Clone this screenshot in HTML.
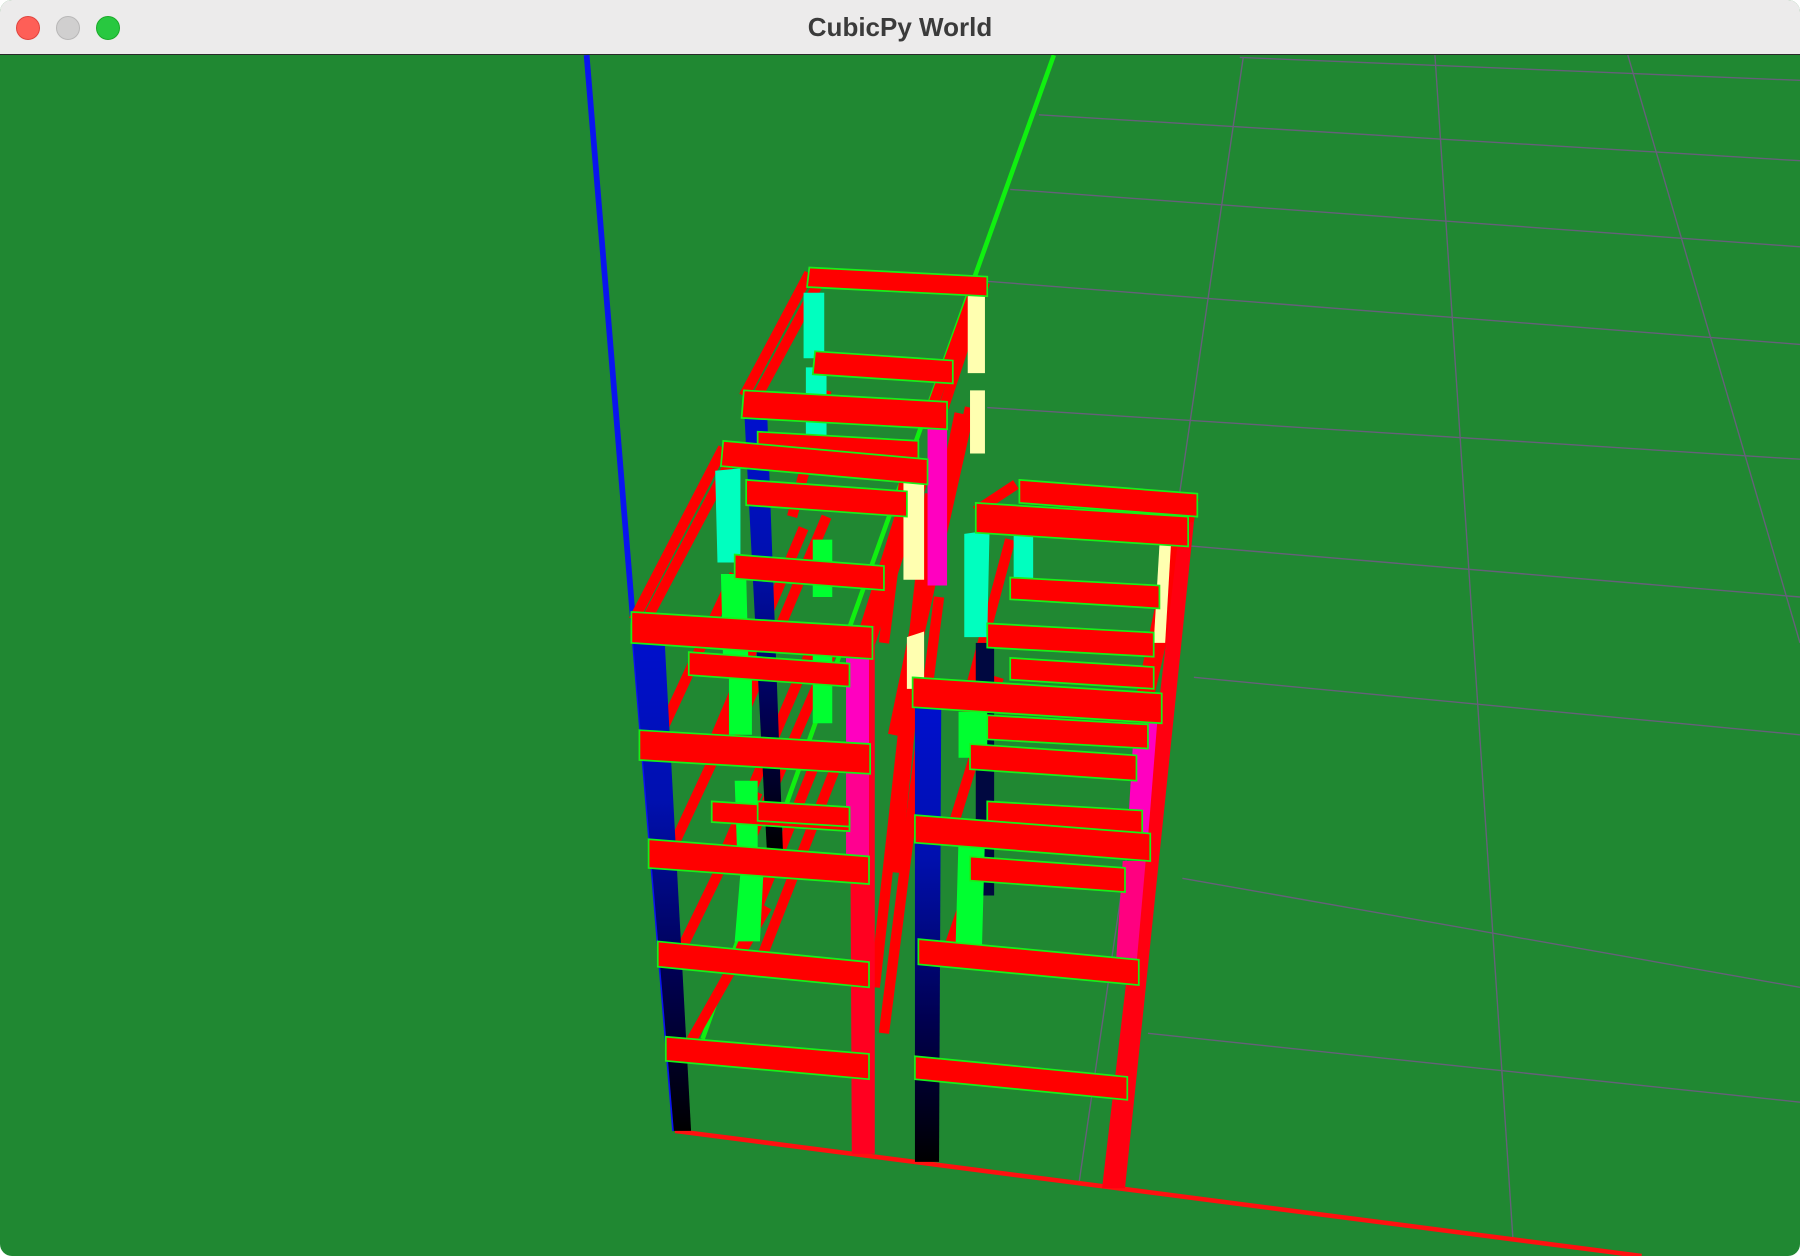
<!DOCTYPE html>
<html><head><meta charset="utf-8"><style>
html,body{margin:0;padding:0;background:#fff;}
.win{position:relative;width:1800px;height:1256px;overflow:hidden;border-radius:12px;background:#208832;}
.tb{position:absolute;left:0;top:0;width:1800px;height:55px;background:#ecebeb;border-bottom:1px solid #2a2a2a;box-sizing:border-box;}
.tb .t{position:absolute;left:0;right:0;top:12px;text-align:center;font:bold 26px "Liberation Sans",sans-serif;color:#3b3b3b;}
.d{position:absolute;top:16px;width:24px;height:24px;border-radius:50%;}
svg{position:absolute;left:0;top:0;}
</style></head><body><div class="win">
<svg width="1800" height="1256" viewBox="0 0 1568 1094" preserveAspectRatio="none">
<defs><linearGradient id="bl" x1="0" y1="0" x2="0" y2="1"><stop offset="0" stop-color="#0010d0"/><stop offset="0.35" stop-color="#0010b0"/><stop offset="0.7" stop-color="#000050"/><stop offset="1" stop-color="#000"/></linearGradient></defs>
<g stroke="#66607a" stroke-width="1.2" fill="none">
<path d="M1080 50 L1568 70"/><path d="M905 100 L1568 140"/><path d="M880 165 L1568 215"/><path d="M860 245 L1568 300"/><path d="M860 355 L1568 400"/><path d="M1030 475 L1568 520"/><path d="M1040 590 L1568 640"/><path d="M1030 765 L1568 860"/><path d="M1000 900 L1568 960"/>
<path d="M1083 50 L940 1030"/><path d="M1250 48 L1318 1080"/><path d="M1418 48 L1568 560"/>
</g>
<path d="M511 48 L588 985" stroke="#0a14f0" stroke-width="5"/>
<path d="M918 48 L612 905" stroke="#10f010" stroke-width="4"/>
<path d="M588 985 L1430 1094" stroke="#ff1010" stroke-width="4"/>
<g stroke="#ff0000" stroke-width="9" fill="none">
<path d="M705 238 L648 345"/><path d="M714 245 L657 350"/><path d="M858 246 L822 355"/><path d="M850 250 L813 352"/>
<path d="M630 390 L552 540"/><path d="M640 395 L562 542"/><path d="M808 405 L758 560"/><path d="M798 405 L750 558"/>
<path d="M885 422 L850 445"/><path d="M1040 434 L1000 610"/><path d="M1030 438 L993 612"/>
<path d="M845 355 L790 600"/><path d="M836 360 L778 640"/><path d="M810 430 L762 860"/><path d="M818 520 L770 900"/>
<path d="M640 500 L575 640"/><path d="M650 600 L585 740"/><path d="M660 690 L592 830"/><path d="M668 790 L600 910"/>
<path d="M720 450 L640 640"/><path d="M728 560 L650 740"/><path d="M735 650 L665 830"/>
<path d="M700 460 L620 650"/><path d="M705 570 L628 750"/><path d="M712 660 L640 840"/>
<path d="M880 470 L840 620"/><path d="M870 590 L830 720"/><path d="M870 700 L825 830"/>
<path d="M720 340 L690 450"/><path d="M790 400 L770 560"/><path d="M800 560 L780 760"/>
</g>
<polygon points="550,540 578,540 602,985 587,985" fill="url(#bl)"/>
<polygon points="648,352 668,352 682,740 668,740" fill="url(#bl)"/>
<polygon points="797,600 820,600 818,1012 797,1012" fill="url(#bl)"/>
<rect x="850" y="560" width="16" height="220" fill="#000840"/>
<g fill="#00ffbf"><polygon points="700,255 718,255 718,312 700,312"/><polygon points="623,410 645,408 645,490 625,490"/><polygon points="840,465 862,462 860,555 840,555"/><polygon points="883,460 900,460 900,505 883,505"/><polygon points="702,320 720,320 720,385 702,385"/></g>
<g fill="#00ff30"><polygon points="628,500 650,500 652,580 630,580"/><polygon points="635,590 655,590 655,640 635,640"/><polygon points="640,680 660,680 660,740 642,740"/><polygon points="645,760 665,760 662,820 640,820"/><polygon points="835,620 860,620 860,660 835,660"/><polygon points="835,730 858,730 855,840 832,840"/><polygon points="708,470 725,470 725,520 708,520"/><polygon points="708,560 725,560 725,630 708,630"/></g>
<g fill="#ffffb0"><polygon points="787,420 805,420 805,505 787,505"/><polygon points="843,258 858,255 858,325 843,325"/><polygon points="845,340 858,340 858,395 845,395"/><polygon points="790,555 805,550 805,600 790,600"/><polygon points="1010,475 1020,475 1015,560 1005,560"/></g>
<polygon points="740,545 762,545 762,1005 742,1005" fill="#ff0020"/>
<polygon points="737,572 757,572 757,655 737,655" fill="#ff00c0"/>
<polygon points="737,672 757,672 757,750 737,750" fill="#ff0090"/>
<polygon points="808,360 825,360 825,510 808,510" fill="#ff00c0"/>
<polygon points="1028,455 1040,455 980,1035 960,1035" fill="#ff0010"/>
<polygon points="988,630 1008,630 1000,730 982,730" fill="#ff00c0"/>
<polygon points="978,750 998,750 990,840 972,840" fill="#ff0080"/>
<g fill="#ff0000" stroke="#18f018" stroke-width="1.5">
<polygon points="705,233 860,241 860,258 703,250"/>
<polygon points="710,306 830,314 830,334 708,326"/>
<polygon points="648,340 825,350 825,374 646,364"/>
<polygon points="660,376 800,384 800,404 660,396"/>
<polygon points="630,384 808,400 808,422 628,406"/>
<polygon points="650,418 790,428 790,450 650,440"/>
<polygon points="640,483 770,493 770,514 640,504"/>
<polygon points="550,533 760,546 760,574 550,560"/>
<polygon points="600,568 740,578 740,598 600,588"/>
<polygon points="557,636 758,648 758,674 557,662"/>
<polygon points="620,698 740,706 740,724 620,716"/>
<polygon points="565,731 757,746 757,770 565,756"/>
<polygon points="573,820 757,838 757,860 573,842"/>
<polygon points="580,903 757,918 757,940 580,924"/>
<polygon points="888,418 1043,430 1043,450 888,438"/>
<polygon points="850,438 1035,450 1035,476 850,464"/>
<polygon points="880,503 1010,510 1010,530 880,522"/>
<polygon points="860,543 1005,551 1005,572 860,564"/>
<polygon points="880,573 1005,581 1005,600 880,592"/>
<polygon points="795,590 1012,604 1012,630 795,616"/>
<polygon points="860,623 1000,631 1000,652 860,644"/>
<polygon points="845,648 990,658 990,680 845,670"/>
<polygon points="860,698 995,706 995,726 860,718"/>
<polygon points="797,710 1002,726 1002,750 797,734"/>
<polygon points="845,746 980,756 980,777 845,767"/>
<polygon points="800,818 992,836 992,858 800,840"/>
<polygon points="797,920 982,938 982,958 797,940"/>
<polygon points="660,698 740,703 740,720 660,715"/>
</g>
</svg>
<div class="tb"><div class="d" style="left:16px;background:#fe5f57;border:1px solid #e0443e;box-sizing:border-box"></div><div class="d" style="left:56px;background:#d0cfcf;border:1px solid #b8b7b7;box-sizing:border-box"></div><div class="d" style="left:96px;background:#28c840;border:1px solid #1aab29;box-sizing:border-box"></div><div class="t">CubicPy World</div></div>
</div></body></html>
